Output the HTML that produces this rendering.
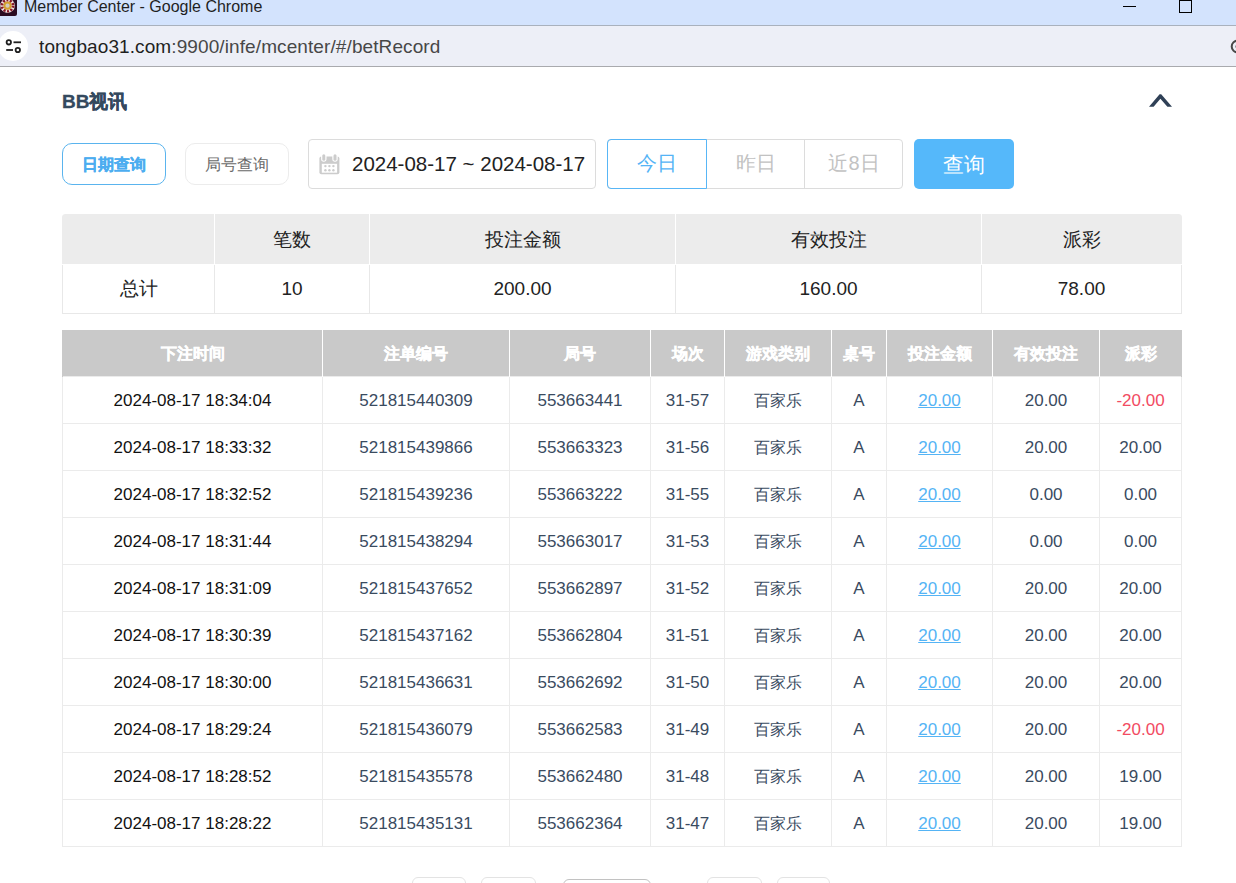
<!DOCTYPE html>
<html><head><meta charset="utf-8">
<style>
*{box-sizing:border-box;margin:0;padding:0}
html,body{width:1236px;height:883px;overflow:hidden;background:#fff;font-family:"Liberation Sans",sans-serif;position:relative}
.abs{position:absolute}
#titlebar{left:0;top:0;width:1236px;height:26px;background:#d3e3fd;border-bottom:1px solid #a9b1bd}
#title{left:24px;top:-2px;font-size:16px;color:#1f1f1f;white-space:nowrap}
#addr{left:0;top:26px;width:1236px;height:41px;background:#edeff7;border-bottom:1px solid #a9aaae}
#url{left:39px;top:10px;font-size:19px;color:#1f1f1f;white-space:nowrap;letter-spacing:0.1px}
#url span{color:#474747}
#content{left:0;top:66px;width:1236px;height:817px;background:#fff}
.t{white-space:nowrap}
#bbh{left:62px;top:89px;font-size:19px;font-weight:700;color:#34495e;-webkit-text-stroke:0.3px #34495e}
.btn{position:absolute;border-radius:10px;text-align:center}
#b1{left:62px;top:143px;width:104px;height:42px;border:1px solid #5ab4ee;color:#4cadf0;font-weight:700;font-size:16px;line-height:41px;-webkit-text-stroke:0.3px #4cadf0}
#b2{left:185px;top:143px;width:104px;height:42px;border:1px solid #ececec;color:#6a6a6a;font-size:16px;line-height:42px}
#date{left:308px;top:139px;width:288px;height:50px;border:1px solid #dcdcdc;border-radius:4px}
#datetxt{left:43px;top:12px;font-size:20.5px;color:#222;letter-spacing:0px}
#seg{left:607px;top:139px;width:296px;height:50px;border:1px solid #dcdcdc;border-radius:4px}
.sg{position:absolute;top:-1px;height:50px;text-align:center;line-height:49px;font-size:20px;color:#c2c2c2}
#search{left:914px;top:139px;width:100px;height:50px;background:#55b8fa;border-radius:5px;color:#fff;font-size:20.5px;font-weight:400;text-align:center;line-height:51px}
table{border-collapse:collapse;position:absolute;table-layout:fixed}
#sum{left:62px;top:214px;width:1119px}
#sum td{height:49px;text-align:center;font-size:19px;color:#222;border:1px solid #e8e8e8}
#sum tr.h td{height:50px;background:#ececec;border-color:#fff;border-top:1px solid #ececec;padding-top:1px}
#det{left:62px;top:330px;width:1119px}
#det th{height:46px;padding-top:3px;background:#c9c9c9;color:#fff;font-size:16px;font-weight:700;-webkit-text-stroke:0.4px #fff;border-left:1px solid #fff;text-align:center}
#det td{height:47px;padding-top:2px;text-align:center;font-size:17px;color:#111;border:1px solid #ebebeb}
#det td.a{color:#3a4b5f}
#det td.g{color:#3a4b5f;font-size:16px;padding-top:3px}
#det td.lk{color:#55b4f5;text-decoration:underline}
#det td.neg{color:#f24b62}
.pg{position:absolute;top:877px;height:20px;border:1px solid #e3e3e3;border-radius:6px}
</style></head><body>
<div id="titlebar" class="abs"></div>
<div id="title" class="abs t">Member Center - Google Chrome</div>
<div id="addr" class="abs">
  <div id="url" class="abs t">tongbao31.com<span>:9900/infe/mcenter/#/betRecord</span></div>
</div>
<div id="bbh" class="abs t">BB视讯</div>
<div id="b1" class="btn">日期查询</div>
<div id="b2" class="btn">局号查询</div>
<div id="date" class="abs"><div id="datetxt" class="abs t">2024-08-17 ~ 2024-08-17</div></div>
<div id="seg" class="abs">
  <div class="sg" style="left:-1px;width:100px;border:1px solid #58b6f6;border-radius:4px 0 0 4px;color:#55b4f6;line-height:46px">今日</div>
  <div class="sg" style="left:99px;width:98px">昨日</div>
  <div class="sg" style="left:196px;width:99px;border-left:1px solid #dcdcdc">近8日</div>
</div>
<div id="search" class="abs">查询</div>

<table id="sum">
<colgroup><col style="width:152px"><col style="width:155px"><col style="width:306px"><col style="width:306px"><col style="width:200px"></colgroup>
<tr class="h"><td style="border-left-color:#ececec"></td><td>笔数</td><td>投注金额</td><td>有效投注</td><td style="border-right-color:#ececec">派彩</td></tr>
<tr><td>总计</td><td>10</td><td>200.00</td><td>160.00</td><td>78.00</td></tr>
</table>

<table id="det">
<colgroup><col style="width:260px"><col style="width:187px"><col style="width:141px"><col style="width:74px"><col style="width:107px"><col style="width:55px"><col style="width:106px"><col style="width:107px"><col style="width:82px"></colgroup>
<tr><th style="border-left:1px solid #c9c9c9">下注时间</th><th>注单编号</th><th>局号</th><th>场次</th><th>游戏类别</th><th>桌号</th><th>投注金额</th><th>有效投注</th><th style="border-right:1px solid #c9c9c9">派彩</th></tr>
<tr><td>2024-08-17 18:34:04</td><td class="a">521815440309</td><td class="a">553663441</td><td class="a">31-57</td><td class="g">百家乐</td><td class="a">A</td><td class="lk">20.00</td><td class="a">20.00</td><td class="neg">-20.00</td></tr>
<tr><td>2024-08-17 18:33:32</td><td class="a">521815439866</td><td class="a">553663323</td><td class="a">31-56</td><td class="g">百家乐</td><td class="a">A</td><td class="lk">20.00</td><td class="a">20.00</td><td class="a">20.00</td></tr>
<tr><td>2024-08-17 18:32:52</td><td class="a">521815439236</td><td class="a">553663222</td><td class="a">31-55</td><td class="g">百家乐</td><td class="a">A</td><td class="lk">20.00</td><td class="a">0.00</td><td class="a">0.00</td></tr>
<tr><td>2024-08-17 18:31:44</td><td class="a">521815438294</td><td class="a">553663017</td><td class="a">31-53</td><td class="g">百家乐</td><td class="a">A</td><td class="lk">20.00</td><td class="a">0.00</td><td class="a">0.00</td></tr>
<tr><td>2024-08-17 18:31:09</td><td class="a">521815437652</td><td class="a">553662897</td><td class="a">31-52</td><td class="g">百家乐</td><td class="a">A</td><td class="lk">20.00</td><td class="a">20.00</td><td class="a">20.00</td></tr>
<tr><td>2024-08-17 18:30:39</td><td class="a">521815437162</td><td class="a">553662804</td><td class="a">31-51</td><td class="g">百家乐</td><td class="a">A</td><td class="lk">20.00</td><td class="a">20.00</td><td class="a">20.00</td></tr>
<tr><td>2024-08-17 18:30:00</td><td class="a">521815436631</td><td class="a">553662692</td><td class="a">31-50</td><td class="g">百家乐</td><td class="a">A</td><td class="lk">20.00</td><td class="a">20.00</td><td class="a">20.00</td></tr>
<tr><td>2024-08-17 18:29:24</td><td class="a">521815436079</td><td class="a">553662583</td><td class="a">31-49</td><td class="g">百家乐</td><td class="a">A</td><td class="lk">20.00</td><td class="a">20.00</td><td class="neg">-20.00</td></tr>
<tr><td>2024-08-17 18:28:52</td><td class="a">521815435578</td><td class="a">553662480</td><td class="a">31-48</td><td class="g">百家乐</td><td class="a">A</td><td class="lk">20.00</td><td class="a">20.00</td><td class="a">19.00</td></tr>
<tr><td>2024-08-17 18:28:22</td><td class="a">521815435131</td><td class="a">553662364</td><td class="a">31-47</td><td class="g">百家乐</td><td class="a">A</td><td class="lk">20.00</td><td class="a">20.00</td><td class="a">19.00</td></tr>
</table>

<div class="pg" style="left:412px;width:54px"></div>
<div class="pg" style="left:481px;width:55px"></div>
<div class="pg" style="left:563px;top:879px;width:88px;border-color:#c2c2c2"></div>
<div class="pg" style="left:707px;width:55px"></div>
<div class="pg" style="left:777px;width:53px"></div>
<svg class="abs" style="left:0;top:0" width="1236" height="883" viewBox="0 0 1236 883">
<path d="M0,0 H17 V14 A2,2 0 0 1 15,16 H0 Z" fill="#2a0c22"/>
<circle cx="7.5" cy="5.7" r="7.3" fill="#eee2e2"/>
<circle cx="7.5" cy="5.7" r="5.5" fill="none" stroke="#861828" stroke-width="2.8" stroke-dasharray="2 1.45"/>
<circle cx="7.5" cy="5.7" r="4.1" fill="#d4a02e"/>
<circle cx="7.5" cy="5.7" r="2.1" fill="#d2cbbd"/>
<line x1="1123" y1="6.5" x2="1136" y2="6.5" stroke="#000" stroke-width="1"/>
<rect x="1179.5" y="0.5" width="12" height="12" fill="none" stroke="#000" stroke-width="1"/>
<circle cx="13" cy="46" r="15" fill="#fff"/>
<circle cx="8.8" cy="42.3" r="2.2" fill="none" stroke="#1f1f1f" stroke-width="1.8"/>
<line x1="13.5" y1="42.3" x2="21" y2="42.3" stroke="#1f1f1f" stroke-width="1.8"/>
<line x1="6.2" y1="50" x2="13" y2="50" stroke="#1f1f1f" stroke-width="1.8"/>
<circle cx="17.8" cy="50" r="2.2" fill="none" stroke="#1f1f1f" stroke-width="1.8"/>
<circle cx="1237.5" cy="46.5" r="5.8" fill="none" stroke="#474747" stroke-width="2"/>
<circle cx="1237.5" cy="46.5" r="2" fill="#474747"/>
<path d="M62,214 h3.5 a3.5,3.5 0 0 0 -3.5,3.5 z" fill="#fff"/>
<path d="M1182,214 v3.5 a3.5,3.5 0 0 0 -3.5,-3.5 z" fill="#fff"/>
<polygon points="1149,106.8 1159.6,94.2 1161.2,94.2 1172,106.8 1167.4,106.8 1160.4,98.8 1153.6,106.8" fill="#2f4056"/>
<g fill="#cccccc">
<rect x="319.4" y="156.5" width="20" height="17.8" rx="2"/>
</g>
<rect x="321.8" y="163.8" width="15.3" height="8.9" fill="#fff"/>
<g fill="#cccccc">
<circle cx="325.4" cy="166.1" r="1.2"/><circle cx="329.4" cy="166.1" r="1.2"/><circle cx="333.4" cy="166.1" r="1.2"/>
<circle cx="325.4" cy="170.3" r="1.2"/><circle cx="329.4" cy="170.3" r="1.2"/><circle cx="333.4" cy="170.3" r="1.2"/>
</g>
<rect x="321.1" y="153.2" width="5.4" height="8.6" rx="2.7" fill="#fff"/>
<rect x="332.3" y="153.2" width="5.4" height="8.6" rx="2.7" fill="#fff"/>
<rect x="322.3" y="154.2" width="3" height="6.6" rx="1.5" fill="#cccccc"/>
<rect x="333.5" y="154.2" width="3" height="6.6" rx="1.5" fill="#cccccc"/>
</svg>
</body></html>
